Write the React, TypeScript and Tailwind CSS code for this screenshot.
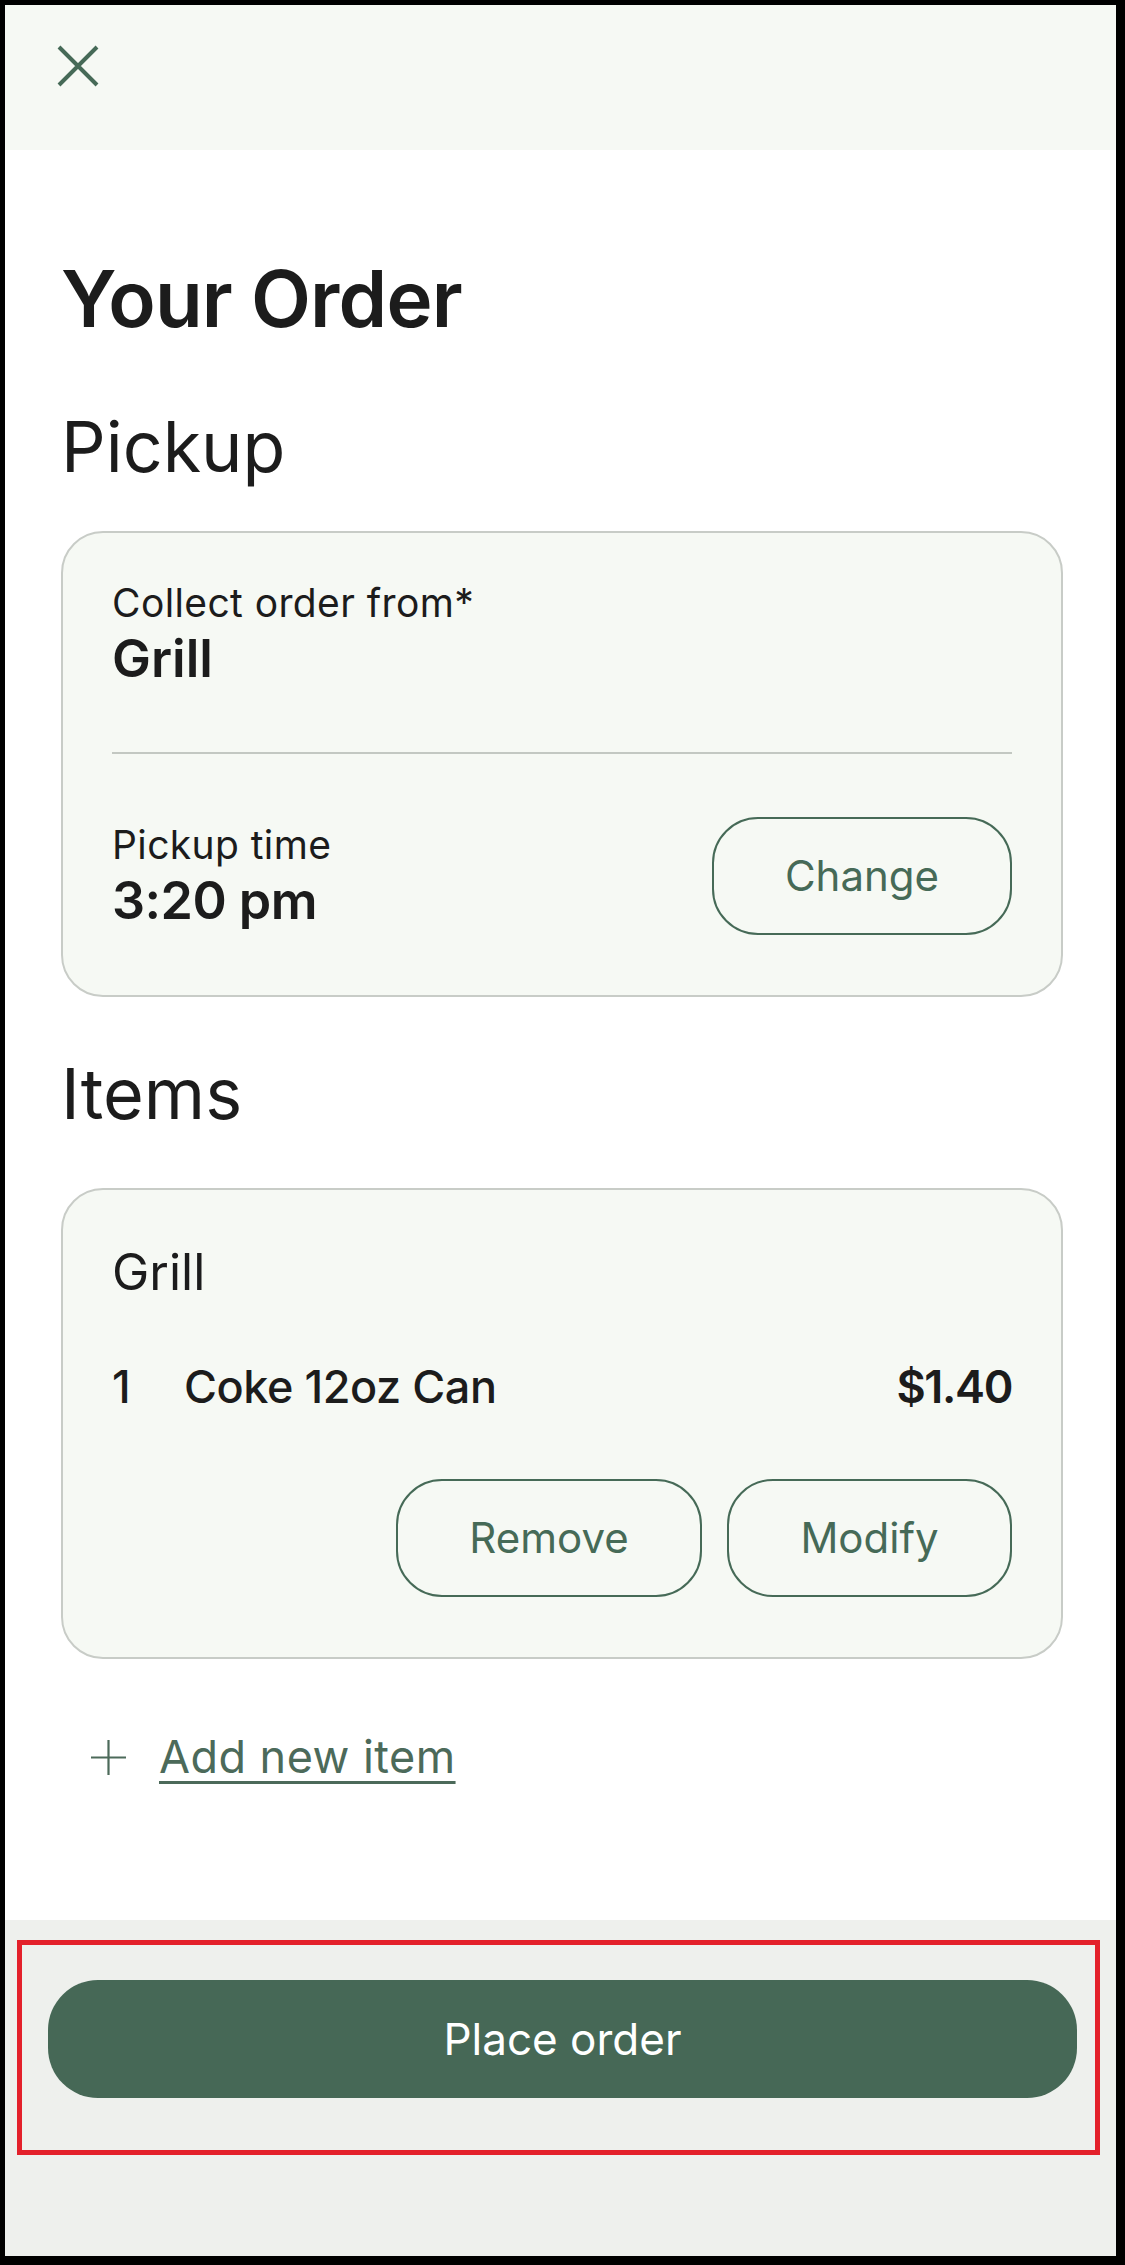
const font = { fontFamily: 'Inter, "Noto Sans", sans-serif' }

const green = 'text-[#466a57]'

const CloseIcon = () => (
  <svg width="42" height="42" viewBox="0 0 42 42" fill="none" stroke="#466a57" strokeWidth="4">
    <path d="M2 2 L40 40 M40 2 L2 40" />
  </svg>
)

const PlusIcon = () => (
  <svg width="37" height="37" viewBox="0 0 37 37" fill="none" stroke="#4c6a5a" strokeWidth="2.2">
    <path d="M18.5 1 V36 M1 18.5 H36" />
  </svg>
)

const OutlineButton = ({ label, width }: { label: string; width: string }) => (
  <button
    className={`${width} h-[118px] rounded-[46px] border-[2.5px] border-[#466a57] text-[42px] leading-none ${green}`}
  >
    {label}
  </button>
)

export default function App() {
  return (
    <div
      style={font}
      className="w-[1125px] h-[2265px] flex flex-col bg-white border-black border-t-[5px] border-l-[5px] border-r-[9px] border-b-[9px] text-[#1c1c1c]"
    >
      <header className="h-[145px] shrink-0 bg-[#f6f9f4] pl-[52px] pt-[40px]">
        <CloseIcon />
      </header>

      <main className="flex-1 pl-[56px] pr-[53px]">
        <h1 className="mt-[110px] text-[78px] leading-[78px] font-semibold tracking-[-0.01em]">Your Order</h1>
        <h2 className="mt-[74px] text-[70px] leading-[70px]">Pickup</h2>

        <section className="mt-[49px] rounded-[42px] border-2 border-[#c8ccc7] bg-[#f6f9f4] px-[49px] pt-[47px] pb-[60px]">
          <p className="text-[39px] leading-[46px] tracking-[0.01em]">Collect order from*</p>
          <p className="mt-[3px] text-[52px] leading-[60px] font-semibold">Grill</p>
          <div className="mt-[63px] h-[2px] bg-[#c3c8c2]" />
          <div className="mt-[63px] flex items-center justify-between">
            <div>
              <p className="text-[39px] leading-[46px] tracking-[0.01em]">Pickup time</p>
              <p className="mt-[3px] text-[52px] leading-[60px] font-semibold tracking-[-0.01em]">3:20 pm</p>
            </div>
            <OutlineButton label="Change" width="w-[300px]" />
          </div>
        </section>

        <h2 className="mt-[62px] text-[70px] leading-[70px]">Items</h2>

        <section className="mt-[59px] rounded-[42px] border-2 border-[#c8ccc7] bg-[#f6f9f4] px-[49px] pt-[53px] pb-[60px]">
          <p className="text-[50px] leading-[58px]">Grill</p>
          <div className="mt-[59px] flex items-center text-[45px] leading-[54px] font-medium">
            <span className="w-[72px]">1</span>
            <span className="flex-1 tracking-[-0.01em]">Coke 12oz Can</span>
            <span className="font-semibold tracking-[-0.03em]">$1.40</span>
          </div>
          <div className="mt-[65px] flex justify-end gap-[25px]">
            <OutlineButton label="Remove" width="w-[306px]" />
            <OutlineButton label="Modify" width="w-[285px]" />
          </div>
        </section>

        <div className="mt-[72px] pl-[29px] flex items-center gap-[32px]">
          <PlusIcon />
          <a className="text-[45px] leading-[52px] tracking-[0.01em] text-[#4c6a5a] underline decoration-[2.5px] underline-offset-[8px]">
            Add new item
          </a>
        </div>
      </main>

      <footer className="h-[336px] shrink-0 bg-[#eef0ed] pt-[20px] pl-[12px]">
        <div className="w-[1083px] h-[215px] border-[5px] border-[#e3212b] pl-[26px] pr-[18px] pt-[35px]">
          <button className="w-full h-[118px] rounded-[50px] bg-[#466856] text-white text-[44px] leading-none">
            Place order
          </button>
        </div>
      </footer>
    </div>
  )
}
